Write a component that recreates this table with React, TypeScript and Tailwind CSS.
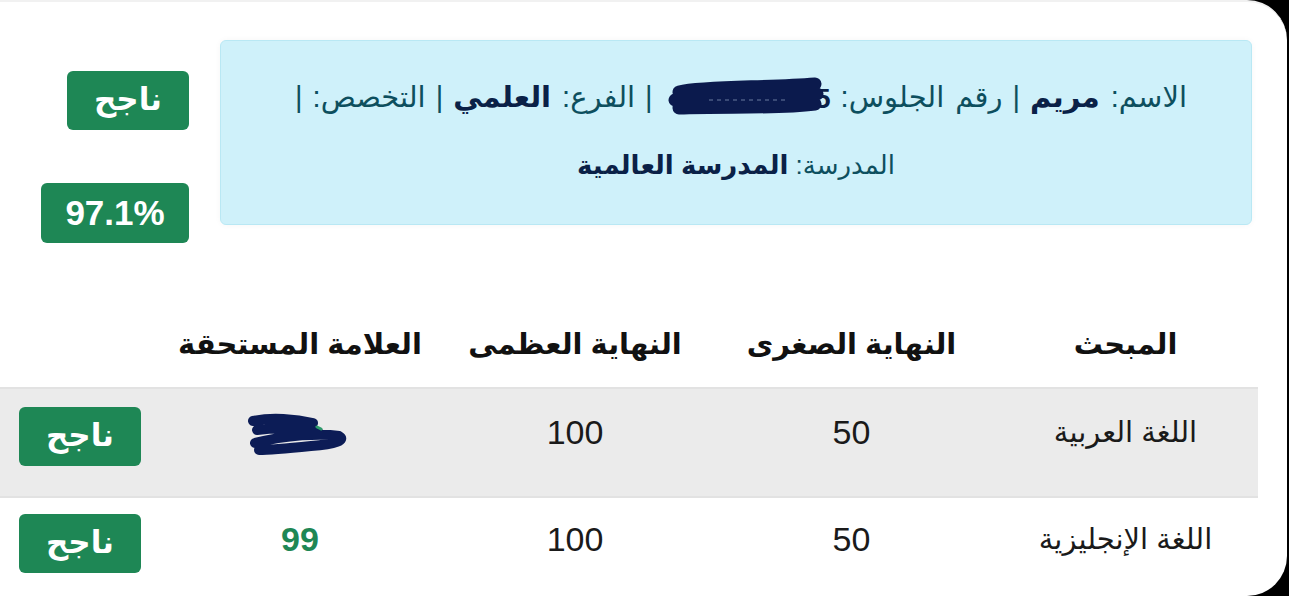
import React from 'react';

const FONT = { fontFamily: '"Liberation Sans", "DejaVu Sans", sans-serif' };

// dark marker scribble hiding the seat number in the info box
function SeatScribble() {
  return (
    <span className="inline-block relative w-[166px] h-[44px] align-middle mr-[10px] ml-[2px]">
      <b className="absolute right-0 top-[2px] text-[28px] text-[#0a2147]">5</b>
      <svg width="166" height="44" viewBox="0 0 166 44" className="absolute inset-0">
        <path
          d="M14 16 C40 10 100 12 150 8 M10 24 C50 20 100 22 152 18 M14 32 C60 30 110 33 150 28"
          stroke="#0b1a4d"
          strokeWidth="13"
          strokeLinecap="round"
          fill="none"
        />
        <path d="M44 24 H124" stroke="#6b7aa0" strokeWidth="1" strokeDasharray="4 4" />
      </svg>
    </span>
  );
}

// scribble in the score cell of the first row
function ScoreScribble() {
  return (
    <svg width="110" height="46" viewBox="0 0 110 46" className="mb-[6px] mr-[8px]">
      <path
        d="M12 10 C30 6 55 8 72 12 M16 19 C40 16 70 18 78 22 M14 32 C45 24 80 22 98 25 C105 29 95 33 70 35 C50 37 30 39 18 39"
        stroke="#0c1c56"
        strokeWidth="10"
        strokeLinecap="round"
        fill="none"
      />
      <path d="M76 16 l4 2" stroke="#2e9a6a" strokeWidth="3" strokeLinecap="round" />
    </svg>
  );
}

function PassBadge() {
  return (
    <div className="w-[122px] h-[59px] rounded-md bg-[#1e8755] text-white text-[31px] font-bold flex items-center justify-center">
      ناجح
    </div>
  );
}

const rows = [
  { subject: 'اللغة العربية', min: 50, max: 100, score: null as number | null },
  { subject: 'اللغة الإنجليزية', min: 50, max: 100, score: 99 },
];

const Sep = () => <span className="mx-[10px]">|</span>;

export default function App() {
  return (
    <div className="w-[1289px] h-[596px] bg-black overflow-hidden" style={FONT}>
      <div dir="rtl" className="w-[1287px] h-[596px] bg-white rounded-r-[40px] border-t-2 border-[#f1f1f1] overflow-hidden">
        {/* student info + result */}
        <div className="flex items-start pr-[35px] pt-[38px] gap-[31px]">
          <div className="w-[1032px] h-[185px] rounded-md bg-[#cff1fa] border border-[#b9e8f4] text-[#0d4f5e] flex flex-col items-center justify-center gap-[26px] shadow-[0_0_6px_rgba(0,0,0,0.04)]">
            <div className="flex items-center text-[29px] [word-spacing:3px] -mt-[4px]">
              <span>
                الاسم: <b className="text-[#0a2147]">مريم</b>
                <Sep />
                رقم الجلوس:
              </span>
              <SeatScribble />
              <span>
                <Sep />
                الفرع: <b className="text-[#0a2147]">العلمي</b>
                <Sep />
                التخصص:
                <Sep />
              </span>
            </div>
            <div className="text-[26px]">
              المدرسة: <b className="text-[#0a2147]">المدرسة العالمية</b>
            </div>
          </div>
          <div className="flex flex-col items-start gap-[53px] pt-[31px]">
            <PassBadge />
            <div dir="ltr" className="w-[148px] h-[60px] rounded-md bg-[#1e8755] text-white text-[35px] font-bold flex items-center justify-center">
              97.1%
            </div>
          </div>
        </div>

        {/* marks table */}
        <div className="w-[1258px] mr-[29px] mt-[60px]">
          <div className="grid grid-cols-[265px_283px_270px_280px_160px] h-[84px] items-center text-[29px] font-bold text-[#111]">
            <div className="text-center">المبحث</div>
            <div className="text-center">النهاية الصغرى</div>
            <div className="text-center">النهاية العظمى</div>
            <div className="text-center">العلامة المستحقة</div>
            <div />
          </div>
          {rows.map((r, i) => (
            <div
              key={r.subject}
              className={
                i === 0
                  ? 'grid grid-cols-[265px_283px_270px_280px_160px] h-[111px] pt-[18px] bg-[#ebebeb] border-y-2 border-[#e2e2e2]'
                  : 'grid grid-cols-[265px_283px_270px_280px_160px] h-[111px] pt-[16px]'
              }
            >
              <div className="h-[59px] flex items-center justify-center text-[29px] text-[#1a1a1a] pb-[8px]">{r.subject}</div>
              <div className="h-[59px] flex items-center justify-center text-[34px] text-[#1a1a1a] pb-[8px]">{r.min}</div>
              <div className="h-[59px] flex items-center justify-center text-[34px] text-[#1a1a1a] pb-[8px]">{r.max}</div>
              <div className="h-[59px] flex items-center justify-center">
                {r.score === null ? (
                  <ScoreScribble />
                ) : (
                  <span className="text-[34px] font-bold text-[#1e8755] pb-[8px]">{r.score}</span>
                )}
              </div>
              <div className="h-[59px] flex items-center justify-center">
                <PassBadge />
              </div>
            </div>
          ))}
        </div>
      </div>
    </div>
  );
}
